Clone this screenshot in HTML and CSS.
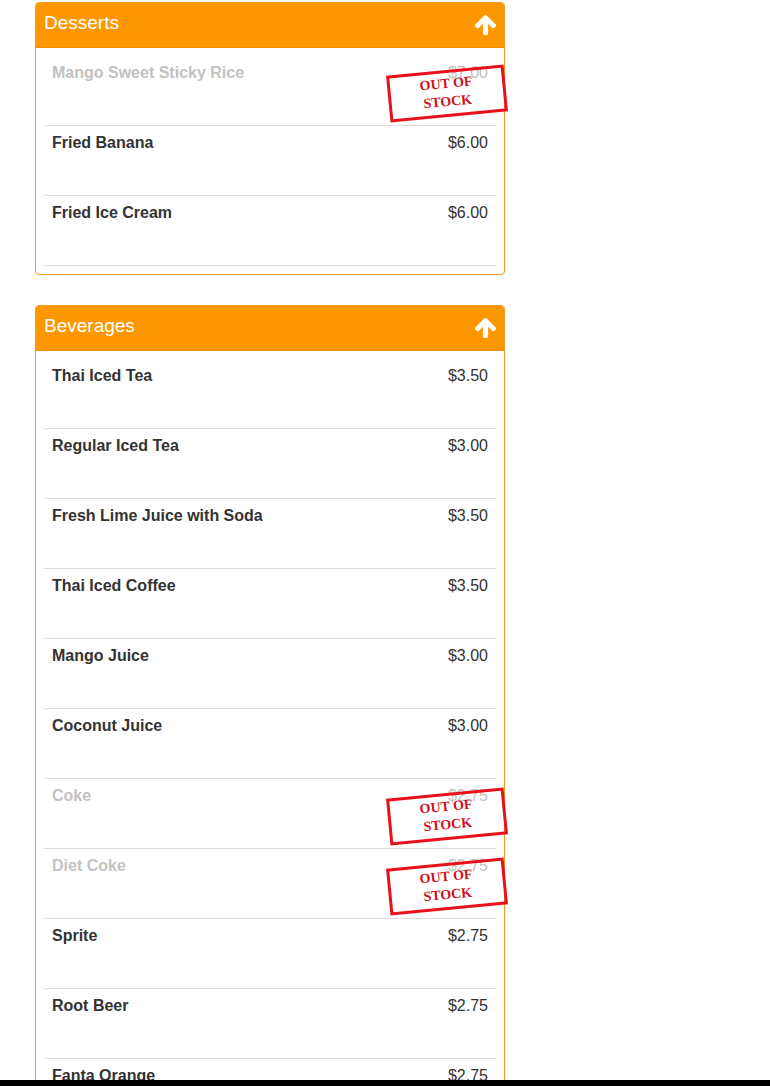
FILE: index.html
```html
<!DOCTYPE html>
<html>
<head>
<meta charset="utf-8">
<link rel="stylesheet" href="styles.css">
</head>
<body>
<div class="wrap">
  <section class="panel">
    <div class="panel-head">
      <span class="panel-title">Desserts</span>
      <svg class="arrow" viewBox="53 192 1558 1472"><path d="M1611 971q0 51-37 90l-75 75q-38 38-91 38-54 0-90-38l-294-293v704q0 52-37.5 84.5T896 1664H768q-53 0-90.5-32.5T640 1547V843L346 1136q-36 38-90 38t-90-38l-75-75q-38-38-38-90 0-53 38-91L742 229q35-37 90-37 54 0 91 37l651 651q37 39 37 91z"/></svg>
    </div>
    <div class="panel-body">
      <div class="item out"><span class="name">Mango Sweet Sticky Rice</span><span class="price">$7.00</span><div class="stamp">OUT OF<br>STOCK</div></div>
      <div class="item"><span class="name">Fried Banana</span><span class="price">$6.00</span></div>
      <div class="item"><span class="name">Fried Ice Cream</span><span class="price">$6.00</span></div>
    </div>
  </section>
  <section class="panel">
    <div class="panel-head">
      <span class="panel-title">Beverages</span>
      <svg class="arrow" viewBox="53 192 1558 1472"><path d="M1611 971q0 51-37 90l-75 75q-38 38-91 38-54 0-90-38l-294-293v704q0 52-37.5 84.5T896 1664H768q-53 0-90.5-32.5T640 1547V843L346 1136q-36 38-90 38t-90-38l-75-75q-38-38-38-90 0-53 38-91L742 229q35-37 90-37 54 0 91 37l651 651q37 39 37 91z"/></svg>
    </div>
    <div class="panel-body">
      <div class="item"><span class="name">Thai Iced Tea</span><span class="price">$3.50</span></div>
      <div class="item"><span class="name">Regular Iced Tea</span><span class="price">$3.00</span></div>
      <div class="item"><span class="name">Fresh Lime Juice with Soda</span><span class="price">$3.50</span></div>
      <div class="item"><span class="name">Thai Iced Coffee</span><span class="price">$3.50</span></div>
      <div class="item"><span class="name">Mango Juice</span><span class="price">$3.00</span></div>
      <div class="item"><span class="name">Coconut Juice</span><span class="price">$3.00</span></div>
      <div class="item out"><span class="name">Coke</span><span class="price">$2.75</span><div class="stamp">OUT OF<br>STOCK</div></div>
      <div class="item out"><span class="name">Diet Coke</span><span class="price">$2.75</span><div class="stamp">OUT OF<br>STOCK</div></div>
      <div class="item"><span class="name">Sprite</span><span class="price">$2.75</span></div>
      <div class="item"><span class="name">Root Beer</span><span class="price">$2.75</span></div>
      <div class="item"><span class="name">Fanta Orange</span><span class="price">$2.75</span></div>
      <div class="item"><span class="name">Pepsi</span><span class="price">$2.75</span></div>
    </div>
  </section>
</div>
<div class="bottom-bar"></div>
</body>
</html>
```
FILE: styles.css
```css
html, body {
  margin: 0;
  padding: 0;
  background: #fff;
  font-family: "Liberation Sans", Arial, sans-serif;
  color: #333;
}
.wrap {
  padding: 2px 0 0 35px;
  width: 470px;
  display: flex;
  flex-direction: column;
  gap: 30px;
}
.panel {
  border: 1px solid #fb9a1e;
  border-radius: 4px;
  background: #fff;
}
.panel-head {
  background: #fd9700;
  height: 45px;
  box-sizing: border-box;
  padding: 0 8px 4px 8px;
  display: flex;
  align-items: center;
  justify-content: space-between;
  border-bottom: 1px solid #f08c00;
  border-radius: 3px 3px 0 0;
}
.panel-title {
  color: #fff;
  font-size: 19px;
}
.arrow {
  width: 21px;
  height: 20px;
  fill: #fff;
  margin-top: 4px;
}
.panel-body {
  padding: 8px 8px 8px 8px;
}
.item {
  position: relative;
  height: 70px;
  box-sizing: border-box;
  padding: 6px 8px 0 8px;
  border-bottom: 1px solid #ddd;
  display: flex;
  justify-content: space-between;
  align-items: flex-start;
  font-size: 16px;
  line-height: 22px;
}
.name {
  font-weight: bold;
  color: #333;
}
.price {
  color: #333;
}
.item.out .name,
.item.out .price {
  color: #c2c2c2;
}
.stamp {
  position: absolute;
  right: -10px;
  top: 14px;
  width: 118px;
  height: 47px;
  box-sizing: border-box;
  border: 3px solid #e8101a;
  transform: rotate(-5.5deg);
  font-family: "Liberation Serif", "Times New Roman", serif;
  font-weight: bold;
  font-size: 14px;
  line-height: 18px;
  color: #d0101e;
  text-align: center;
  padding-top: 2px;
}
.bottom-bar {
  position: fixed;
  left: 0;
  right: 0;
  bottom: 0;
  height: 6px;
  background: #000;
}
```
